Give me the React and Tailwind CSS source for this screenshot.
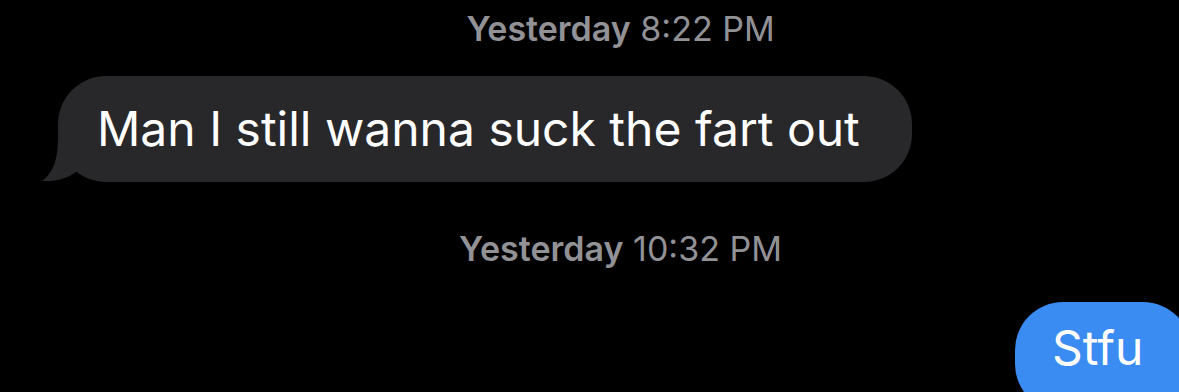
export default function App() {
  return (
    <div className="h-[392px] w-full overflow-hidden bg-black" style={{ fontFamily: 'Inter, "Liberation Sans", sans-serif' }}>
      <div className="pl-[62px] pt-[9px] text-center text-[34px] leading-[40px] text-[#929296]">
        <span className="font-semibold">Yesterday</span> 8:22 PM
      </div>

      <div className="mt-[27px] pl-[58px]">
        <div className="relative inline-flex h-[106px] w-[854px] items-center rounded-[48px] bg-[#28282a] pl-[39px]">
          <svg className="absolute bottom-0 left-[-16px]" width="40" height="44" viewBox="0 0 40 44">
            <path d="M16 0 C16 20 12 34 0 43 C14 44 26 40 34 34 L40 0 Z" fill="#28282a" />
          </svg>
          <span className="relative text-[48px] leading-none text-white">Man I still wanna suck the fart out</span>
        </div>
      </div>

      <div className="mt-[47px] pl-[62px] text-center text-[34px] leading-[40px] text-[#929296]">
        <span className="font-semibold">Yesterday</span> 10:32 PM
      </div>

      <div className="mt-[33px] flex justify-end">
        <div className="mr-[-12px] flex h-[110px] w-[176px] items-start rounded-[48px] bg-[#3b8cf2] pl-[37px] pt-[22px]">
          <span className="text-[48px] leading-none text-white">Stfu</span>
        </div>
      </div>
    </div>
  );
}
